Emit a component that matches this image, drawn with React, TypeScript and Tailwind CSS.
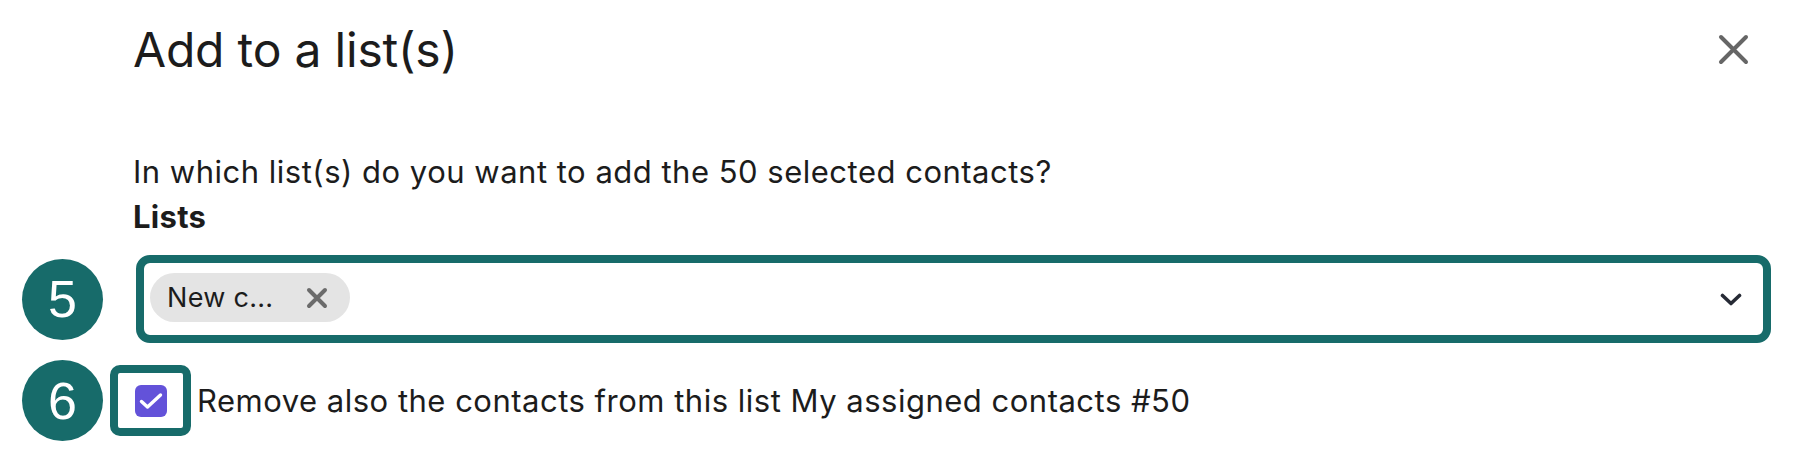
import React from 'react'

const font = { fontFamily: 'Inter, "Noto Sans", sans-serif' }

function StepBadge({ n }: { n: number }) {
  return (
    <div
      className="w-[81px] h-[81px] rounded-full bg-[#176b6a] flex items-center justify-center text-white text-[52px] leading-none shrink-0"
      style={{ fontFamily: '"Liberation Sans", Arial, sans-serif' }}
    >
      {n}
    </div>
  )
}

function CloseIcon({ size, stroke, color }: { size: number; stroke: number; color: string }) {
  return (
    <svg width={size} height={size} viewBox={`0 0 ${size} ${size}`} fill="none">
      <path
        d={`M${stroke / 2 + 1} ${stroke / 2 + 1} L${size - stroke / 2 - 1} ${size - stroke / 2 - 1} M${size - stroke / 2 - 1} ${stroke / 2 + 1} L${stroke / 2 + 1} ${size - stroke / 2 - 1}`}
        stroke={color}
        strokeWidth={stroke}
        strokeLinecap="round"
      />
    </svg>
  )
}

export default function App() {
  return (
    <div className="w-[1794px] h-[472px] bg-white flex flex-col text-[#1c1c1c]" style={font}>
      {/* header */}
      <div className="flex items-start justify-between pl-[133px] pr-[45px]">
        <h1 className="mt-[26px] text-[48px] leading-[48px] font-normal tracking-[-0.2px]">Add to a list(s)</h1>
        <div className="mt-[34px]">
          <CloseIcon size={31} stroke={4} color="#666666" />
        </div>
      </div>

      <p className="mt-[80px] pl-[133px] text-[31px] leading-[36px] tracking-[0.5px]">
        In which list(s) do you want to add the 50 selected contacts?
      </p>
      <p className="mt-[9px] pl-[133px] text-[31px] leading-[36px] font-bold tracking-[0.3px]">Lists</p>

      {/* select row */}
      <div className="mt-[20px] flex items-center pl-[22px]">
        <StepBadge n={5} />
        <div className="ml-[33px] w-[1635px] h-[88px] border-[8px] border-[#176b6a] rounded-[14px] flex items-center justify-between pl-[6px] pr-[21px]">
          <div className="h-[49px] w-[200px] rounded-full bg-[#e4e4e4] flex items-center justify-between pl-[17px] pr-[22px] mt-[-3px]">
            <span className="text-[27px] leading-none text-[#1c1c1c] tracking-[0.3px]">New c...</span>
            <CloseIcon size={22} stroke={4} color="#6b6b6b" />
          </div>
          <svg width="22" height="13" viewBox="0 0 22 13" fill="none">
            <path d="M2.5 2.5 L11 10.5 L19.5 2.5" stroke="#262a35" strokeWidth="3.6" strokeLinecap="round" strokeLinejoin="round" />
          </svg>
        </div>
      </div>

      {/* checkbox row */}
      <div className="mt-[17px] flex items-center pl-[22px]">
        <StepBadge n={6} />
        <div className="ml-[7px] w-[81px] h-[71px] border-[8px] border-[#176b6a] rounded-[10px] flex items-center justify-center">
          <div className="w-[32px] h-[32px] rounded-[6px] bg-[#6352d9] flex items-center justify-center">
            <svg width="24" height="18" viewBox="0 0 24 18" fill="none">
              <path d="M2.5 9.5 L8.5 15 L21.5 3" stroke="white" strokeWidth="3.4" strokeLinecap="round" strokeLinejoin="round" />
            </svg>
          </div>
        </div>
        <span className="ml-[6px] text-[31px] leading-[36px] tracking-[0.5px]">
          Remove also the contacts from this list My assigned contacts #50
        </span>
      </div>
    </div>
  )
}
